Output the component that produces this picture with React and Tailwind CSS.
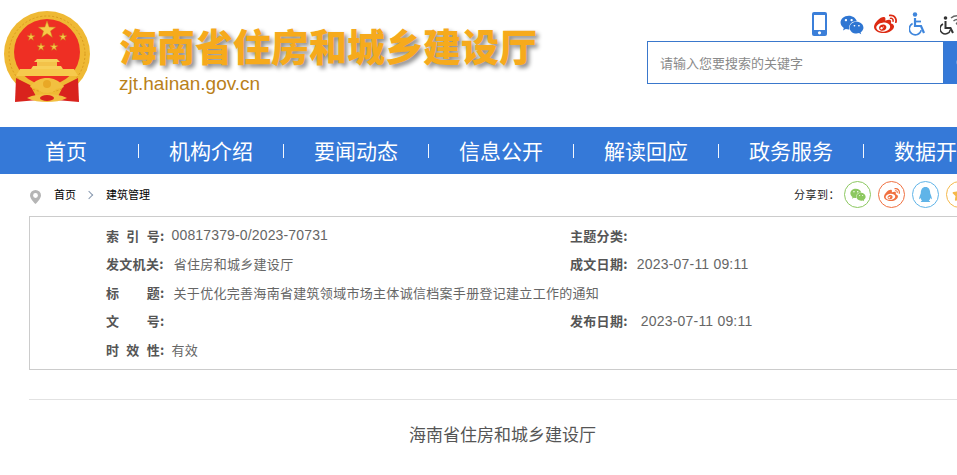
import { Search, Star } from 'lucide-react';
import { FaQq, FaWeibo, FaWeixin } from 'react-icons/fa';

const NAV = ['机构介绍', '要闻动态', '信息公开', '解读回应', '政务服务', '数据开放'];

function StarShape({ x, y, r }) {
  const pts = [];
  for (let i = 0; i < 10; i++) {
    const rad = i % 2 === 0 ? r : r * 0.4;
    const a = (Math.PI / 5) * i - Math.PI / 2;
    pts.push(`${x + rad * Math.cos(a)},${y + rad * Math.sin(a)}`);
  }
  return <polygon points={pts.join(' ')} fill="#f7c948" stroke="#c98a1a" strokeWidth="0.5" />;
}

function Emblem() {
  return (
    <svg width="96" height="110" viewBox="0 0 96 110" className="shrink-0">
      <circle cx="47" cy="54" r="43" fill="#efb934" />
      <circle cx="47" cy="54" r="38" fill="none" stroke="#d99a1e" strokeWidth="1" strokeDasharray="2 2" />
      <circle cx="47" cy="52" r="33" fill="#ee2f24" />
      <StarShape x={47} y={30} r={9} />
      <StarShape x={31} y={37} r={4} />
      <StarShape x={63} y={37} r={4} />
      <StarShape x={41} y={47} r={4} />
      <StarShape x={54} y={47} r={4} />
      <path d="M37 59h20l3 3H34z" fill="#f7cf5a" />
      <rect x="37" y="62" width="20" height="4" fill="#f3c24a" />
      <path d="M33 66h28l2 3H31z" fill="#f7cf5a" />
      <path d="M20 69h54l4 7H16z" fill="#f6c94c" />
      <path d="M16 78 L30 85 L38 100 L15 102z" fill="#d9231d" />
      <path d="M78 78 L64 85 L56 100 L79 102z" fill="#d9231d" />
      <path d="M30 87c5-7 11-9 17-9s12 2 17 9l-8 2c-2 3-5 4-9 4s-7-1-9-4z" fill="#f2c040" />
      <circle cx="47" cy="84" r="4" fill="#e9a826" />
      <path d="M27 98c6-3 13-4 20-4s14 1 20 4c-6 3-13 4-20 4s-14-1-20-4z" fill="#f2c040" />
      <ellipse cx="47" cy="98" rx="7" ry="3" fill="#d9231d" />
    </svg>
  );
}

function TopIcons() {
  return (
    <div className="flex h-[41px] items-start pl-[165px] pt-[12px]">
      <svg width="15" height="24" viewBox="0 0 15 24" className="shrink-0">
        <rect width="15" height="24" rx="2" fill="#3b7fd9" />
        <rect x="2" y="3" width="11" height="15" fill="#fff" />
        <circle cx="7.500" cy="20.800" r="1.600" fill="#fff" />
      </svg>
      <FaWeixin className="ml-[13px] mt-[1px] shrink-0 text-[#2f76d2]" size={24} />
      <FaWeibo className="ml-[10px] mt-[1px] shrink-0 text-[#dd2a12]" size={23} />
      <svg width="18" height="24" viewBox="0 0 18 24" className="ml-[12px] shrink-0" fill="none" stroke="#3f86dc">
        <circle cx="6" cy="2.500" r="2.200" fill="#3f86dc" stroke="none" />
        <path d="M6 6v8h6l3 7" strokeWidth="2.200" />
        <path d="M6 9.500h6" strokeWidth="1.800" />
        <path d="M3.600 11.500a6 6 0 1 0 8.600 6.600" strokeWidth="1.600" />
      </svg>
      <svg width="24" height="24" viewBox="0 0 24 24" className="ml-[13px] shrink-0" fill="none" stroke="#333">
        <circle cx="5.500" cy="6" r="1.800" fill="#333" stroke="none" />
        <path d="M5.500 9v7h5l2.500 5" strokeWidth="2" />
        <path d="M3 12a5.200 5.200 0 1 0 7.400 5.600" strokeWidth="1.500" />
        <path d="M11 6a9 9 0 0 1 12 0M13.500 9a5.500 5.500 0 0 1 7 0" strokeWidth="1.500" stroke="#666" />
        <circle cx="17" cy="11.500" r="1.200" fill="#666" stroke="none" />
      </svg>
    </div>
  );
}

function Header() {
  return (
    <header className="flex h-[127px] bg-white">
      <div className="flex w-[647px] shrink-0">
        <Emblem />
        <div className="ml-[23px] pt-[15px]">
          <h1 className="whitespace-nowrap text-[38px] font-black leading-[60px] text-[#f6aa1c] [text-shadow:3px_3px_4px_rgba(0,0,0,0.45)]">
            海南省住房和城乡建设厅
          </h1>
          <div className="mt-[-3px] font-['Liberation_Sans',sans-serif] text-[19px] leading-[24px] text-[#b9801a]">
            zjt.hainan.gov.cn
          </div>
        </div>
      </div>
      <div className="w-[310px] shrink-0">
        <TopIcons />
        <div className="flex h-[43px] w-[360px]">
          <div className="flex h-full w-[297px] shrink-0 items-center border border-[#3a78cc] bg-white pl-[12px] text-[13px] text-[#8a8a8a]">
            请输入您要搜索的关键字
          </div>
          <div className="flex h-full w-[63px] shrink-0 items-center bg-[#3579d8] pl-[11px]">
            <Search className="text-[#d5e4f7]" size={20} />
          </div>
        </div>
      </div>
    </header>
  );
}

function Nav() {
  return (
    <nav className="flex h-[47px] items-center whitespace-nowrap bg-[#3579d8] pl-[45px] text-[21px] text-white">
      <span className="w-[63px] shrink-0">首页</span>
      {NAV.map((item) => (
        <div key={item} className="flex shrink-0 items-center">
          <span className="mx-[30px] h-[14px] w-[1px] bg-[#f2f6fd]" />
          <span className="w-[84px] shrink-0">{item}</span>
        </div>
      ))}
    </nav>
  );
}

function ShareCircle({ color, children }) {
  return (
    <span
      className="flex h-[27px] w-[27px] shrink-0 items-center justify-center rounded-full border bg-white"
      style={{ borderColor: color, color }}
    >
      {children}
    </span>
  );
}

function Crumbs() {
  return (
    <div className="flex h-[41px] items-center whitespace-nowrap pl-[30px] text-[11px] text-black">
      <svg width="11" height="14" viewBox="0 0 11 14" className="mt-[4px] shrink-0">
        <path d="M5.500 0a5.500 5.500 0 0 1 5.500 5.500C11 9 5.500 14 5.500 14S0 9 0 5.500A5.500 5.500 0 0 1 5.500 0z" fill="#b5b5b5" />
        <circle cx="5.500" cy="5.500" r="2.400" fill="#fff" />
      </svg>
      <span className="ml-[13px] w-[22px]">首页</span>
      <span className="ml-[10px] h-[6px] w-[6px] rotate-45 border-r border-t border-[#8a9ab0]" />
      <span className="ml-[14px] w-[44px]">建筑管理</span>
      <span className="ml-[644px] w-[43px] font-normal tracking-[0.500px] text-[#222]">分享到：</span>
      <div className="ml-[7px] flex gap-[7px]">
        <ShareCircle color="#8cc860"><FaWeixin size={16} /></ShareCircle>
        <ShareCircle color="#f07040"><FaWeibo size={16} /></ShareCircle>
        <ShareCircle color="#60b4e8"><FaQq size={15} /></ShareCircle>
        <ShareCircle color="#f5b84a"><Star size={15} fill="#f5b84a" /></ShareCircle>
      </div>
    </div>
  );
}

function Spaced({ chars }) {
  return (
    <span className="flex w-[54px] shrink-0 justify-between">
      {chars.map((c, i) => (
        <span key={i}>{c}</span>
      ))}
    </span>
  );
}

function Label({ children }) {
  return <span className="font-bold text-[#555]">{children}</span>;
}

function InfoBox() {
  return (
    <section className="ml-[29px] mt-[1px] h-[154px] w-[1100px] border border-[#ccc] pl-[76px] pt-[4px] text-[13px] tracking-[0.3px] text-[#666]">
      <div className="flex h-[28.500px] items-center">
        <div className="flex w-[464px] items-center">
          <Label><span className="flex"><Spaced chars={['索', '引', '号']} />:</span></Label>
          <span className="ml-[7px] mt-[1px] font-['Liberation_Sans',sans-serif] text-[14px] tracking-[0.15px]">00817379-0/2023-70731</span>
        </div>
        <Label>主题分类:</Label>
      </div>
      <div className="flex h-[28.500px] items-center">
        <div className="flex w-[464px] items-center">
          <Label>发文机关:</Label>
          <span className="ml-[10px]">省住房和城乡建设厅</span>
        </div>
        <Label>成文日期:</Label>
        <span className="ml-[9px] mt-[1px] font-['Liberation_Sans',sans-serif] text-[14px] tracking-[0.2px]">2023-07-11 09:11</span>
      </div>
      <div className="flex h-[28.500px] items-center">
        <Label><span className="flex"><Spaced chars={['标', '题']} />:</span></Label>
        <span className="ml-[9px]">关于优化完善海南省建筑领域市场主体诚信档案手册登记建立工作的通知</span>
      </div>
      <div className="flex h-[28.500px] items-center">
        <div className="w-[464px]">
          <Label><span className="flex"><Spaced chars={['文', '号']} />:</span></Label>
        </div>
        <Label>发布日期:</Label>
        <span className="ml-[13px] mt-[1px] font-['Liberation_Sans',sans-serif] text-[14px] tracking-[0.2px]">2023-07-11 09:11</span>
      </div>
      <div className="flex h-[28.500px] items-center">
        <Label><span className="flex"><Spaced chars={['时', '效', '性']} />:</span></Label>
        <span className="ml-[7px]">有效</span>
      </div>
    </section>
  );
}

export default function App() {
  return (
    <div className="h-[475px] w-[957px] overflow-hidden bg-white font-['Noto_Sans_CJK_SC',sans-serif]">
      <div className="w-[1400px]">
        <Header />
        <Nav />
        <Crumbs />
        <InfoBox />
        <div className="ml-[29px] mt-[29px] w-[1100px] border-t border-[#e2e2e2]" />
        <p className="mt-[21px] w-[1005px] text-center text-[17px] text-[#555]">海南省住房和城乡建设厅</p>
      </div>
    </div>
  );
}
